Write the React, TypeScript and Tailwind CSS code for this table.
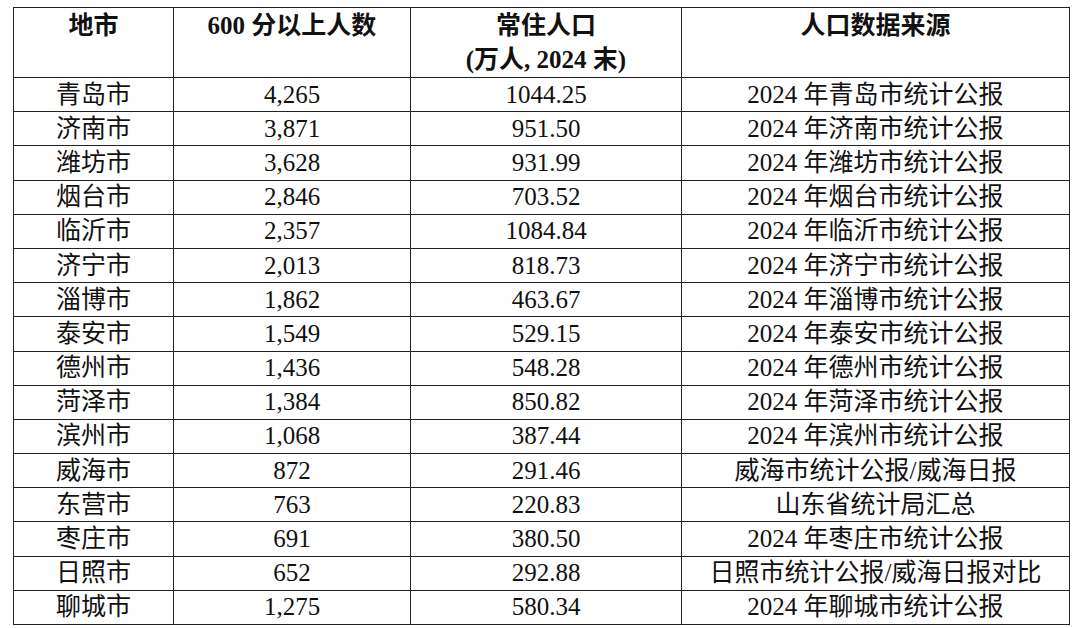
import React from "react";

const rows: [string, string, string, string][] = [
  ["青岛市", "4,265", "1044.25", "2024 年青岛市统计公报"],
  ["济南市", "3,871", "951.50", "2024 年济南市统计公报"],
  ["潍坊市", "3,628", "931.99", "2024 年潍坊市统计公报"],
  ["烟台市", "2,846", "703.52", "2024 年烟台市统计公报"],
  ["临沂市", "2,357", "1084.84", "2024 年临沂市统计公报"],
  ["济宁市", "2,013", "818.73", "2024 年济宁市统计公报"],
  ["淄博市", "1,862", "463.67", "2024 年淄博市统计公报"],
  ["泰安市", "1,549", "529.15", "2024 年泰安市统计公报"],
  ["德州市", "1,436", "548.28", "2024 年德州市统计公报"],
  ["菏泽市", "1,384", "850.82", "2024 年菏泽市统计公报"],
  ["滨州市", "1,068", "387.44", "2024 年滨州市统计公报"],
  ["威海市", "872", "291.46", "威海市统计公报/威海日报"],
  ["东营市", "763", "220.83", "山东省统计局汇总"],
  ["枣庄市", "691", "380.50", "2024 年枣庄市统计公报"],
  ["日照市", "652", "292.88", "日照市统计公报/威海日报对比"],
  ["聊城市", "1,275", "580.34", "2024 年聊城市统计公报"],
];

const font = {
  fontFamily: '"Liberation Serif", "Noto Sans CJK SC", serif',
};

const th = "border-[1.5px] border-[#222] align-top text-center font-bold leading-[34px] pt-[1px] pb-0 px-0";

export default function App() {
  return (
    <div className="w-[1080px] h-[628px] bg-white overflow-hidden pt-[7px] pl-[13px]" style={font}>
      <table className="table-fixed border-collapse text-[#111] text-[25px] w-[1056px]">
        <colgroup>
          <col className="w-[160px]" />
          <col className="w-[237px]" />
          <col className="w-[271px]" />
          <col className="w-[388px]" />
        </colgroup>
        <thead>
          <tr className="h-[70px]">
            <th className={th}>地市</th>
            <th className={th}>600 分以上人数</th>
            <th className={th}>
              常住人口
              <br />
              (万人, 2024 末)
            </th>
            <th className={th}>人口数据来源</th>
          </tr>
        </thead>
        <tbody>
          {rows.map((r, i) => (
            <tr key={i} className="h-[34.2px]">
              {r.map((c, j) => (
                <td key={j} className="border-[1.5px] border-[#222] text-center align-middle leading-[30px] p-0 whitespace-nowrap">
                  {c}
                </td>
              ))}
            </tr>
          ))}
        </tbody>
      </table>
    </div>
  );
}
